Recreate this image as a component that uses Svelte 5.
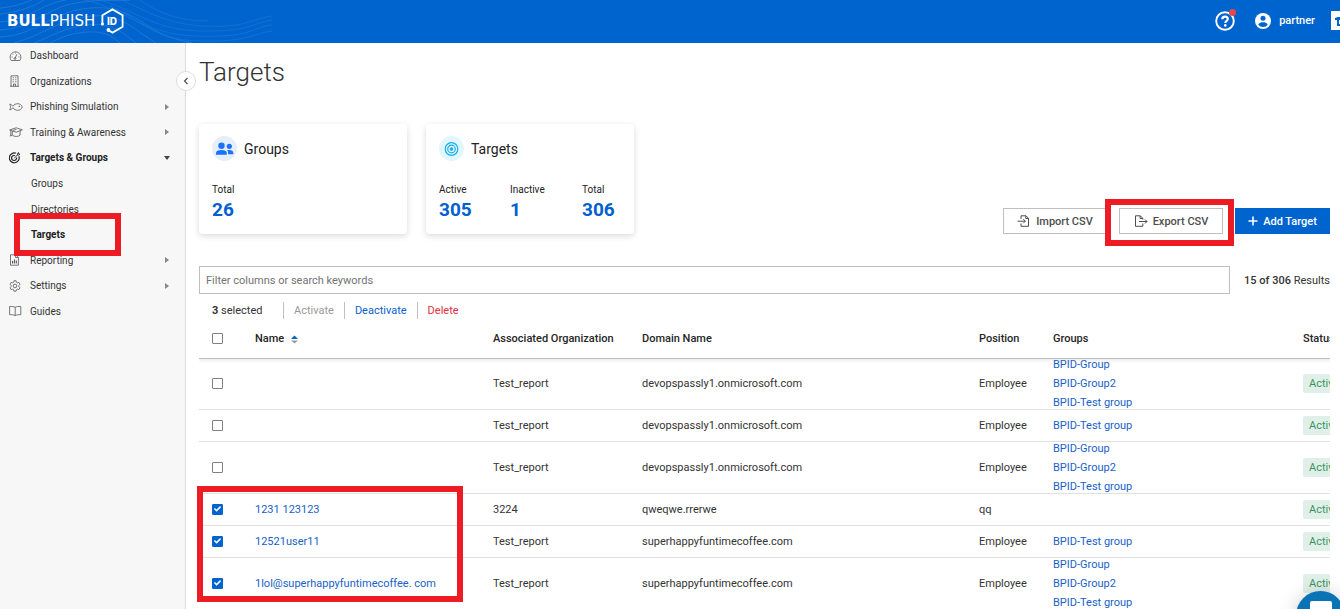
<script lang="ts">
    const nav = [
        { label: 'Dashboard', icon: 'gauge' },
        { label: 'Organizations', icon: 'building' },
        { label: 'Phishing Simulation', icon: 'fish', arrow: 'right' },
        { label: 'Training & Awareness', icon: 'cap', arrow: 'right' },
        { label: 'Targets & Groups', icon: 'target', arrow: 'down', active: true },
        { label: 'Groups', sub: true },
        { label: 'Directories', sub: true },
        { label: 'Targets', sub: true, active: true, marked: true },
        { label: 'Reporting', icon: 'report', arrow: 'right' },
        { label: 'Settings', icon: 'gear', arrow: 'right' },
        { label: 'Guides', icon: 'book' }
    ];

    const allGroups = ['BPID-Group', 'BPID-Group2', 'BPID-Test group'];

    let query = $state('');
    let rows = $state([
        { checked: false, name: '', org: 'Test_report', domain: 'devopspassly1.onmicrosoft.com', position: 'Employee', groups: allGroups },
        { checked: false, name: '', org: 'Test_report', domain: 'devopspassly1.onmicrosoft.com', position: 'Employee', groups: ['BPID-Test group'] },
        { checked: false, name: '', org: 'Test_report', domain: 'devopspassly1.onmicrosoft.com', position: 'Employee', groups: allGroups },
        { checked: true, name: '1231 123123', org: '3224', domain: 'qweqwe.rrerwe', position: 'qq', groups: [] as string[] },
        { checked: true, name: '12521user11', org: 'Test_report', domain: 'superhappyfuntimecoffee.com', position: 'Employee', groups: ['BPID-Test group'] },
        { checked: true, name: '1lol@superhappyfuntimecoffee. com', org: 'Test_report', domain: 'superhappyfuntimecoffee.com', position: 'Employee', groups: allGroups }
    ]);

    let selected = $derived(rows.filter((r) => r.checked).length);

    function toggleAll(e: Event) {
        const on = (e.currentTarget as HTMLInputElement).checked;
        rows.forEach((r) => (r.checked = on));
    }
</script>

{#snippet navIcon(name)}
    <svg class="nav-icon" viewBox="0 0 14 12" fill="none" stroke="currentColor" stroke-width="0.8">
        {#if name === 'gauge'}
            <path d="M2.2 10.500A5.400 5.400 0 1 1 10.800 10.500Z" />
            <path d="M6.100 8.300 7.900 4.100M6.500 2.500v1M2.500 6.900h1M10.500 6.900h-1M3.700 4.200l.6.6" />
            <circle cx="6" cy="8.500" r="0.9" />
        {:else if name === 'building'}
            <path d="M2 11.300V.8h7v10.500M1 11.300h9M4.500 11.300V9h2v2.300" />
            <path d="M3.700 2.800h1M6.300 2.800h1M3.700 4.800h1M6.300 4.800h1M3.700 6.800h1M6.300 6.800h1" stroke-width="1.100" />
        {:else if name === 'fish'}
            <path d="M.8 3c1.200.3 2.400 1.200 3 2.200C5.200 3.400 7 2.700 8.800 2.700c2 0 3.800 1.300 4.500 3.300-.7 2-2.500 3.300-4.500 3.300-1.800 0-3.600-.7-5-2.500-.6 1-1.800 1.900-3 2.200C1.300 7.500 1.600 6.800 1.600 6S1.300 4.500.8 3z" />
            <circle cx="10.300" cy="5.300" r="0.4" />
        {:else if name === 'cap'}
            <path d="M.6 4 7.200 1.800 13.400 3.800 7.200 6.200zM3.300 5.200V9.200c2 1.700 6 1.700 7.800 0V4.800M1.800 4.600v4l-.8 1.800M2 8.600l.8 1.600M4 4.300l3.500-.8" />
        {:else if name === 'target'}
            <path d="M7 1.300A4.900 4.900 0 1 0 9.900 4.300M6 3.700A2.500 2.500 0 1 0 7.500 5.500" stroke-width="1.200" />
            <path d="M5.200 6.300 8.400 3V1.400L9.600.5v1.600h1.400L9.800 3.200H8.400" />
        {:else if name === 'report'}
            <path d="M1.500.8h5.300l2.600 2.600v7.800H1.500zM6.600.8v2.800h2.800" />
            <path d="M3.500 9.500V7M5.400 9.500V5.500M7.300 9.500V6.500" stroke-width="1.100" />
        {:else if name === 'gear'}
            <path d="M4.900.8h2.200l.3 1.500 1.100.6 1.400-.5 1.100 1.800L9.900 5.300v1.300l1.100 1.200-1.100 1.800-1.400-.5-1.100.6-.3 1.500H4.900l-.3-1.500-1.100-.6-1.400.5L1 7.800l1.100-1.200V5.300L1 4.200l1.100-1.800 1.400.5 1.100-.6z" />
            <circle cx="6" cy="6" r="1.800" />
        {:else if name === 'book'}
            <path d="M6.200 10.600V2.300C5 1.500 3 1.400.6 1.500v8.200c2.400-.1 4.400.1 5.600.9 1.200-.8 3.200-1 5.600-.9V1.500C9.400 1.400 7.400 1.500 6.200 2.300" />
        {/if}
    </svg>
{/snippet}

<div class="shell">
    <header class="topbar">
        <svg class="waves" viewBox="0 0 272 43" fill="none" stroke="#1c78d6" aria-hidden="true">
            <path d="M0 8C14 7 24 3 32 0M0 14C20 12 34 6 44 0M0 22C30 20 40 4 66 0M0 30C34 28 46 8 76 3S116 2 130 0M0 37C36 35 50 14 82 9S130 14 148 26 180 40 192 43" />
            <path d="M14 43C40 36 56 22 84 17S126 22 142 34L156 43M34 43C52 36 64 28 86 25S120 30 136 43M50 43C64 36 72 33 88 32S112 36 120 43" />
            <path d="M84 0C120 6 140 34 196 36S250 28 272 25M98 0C130 6 150 30 200 31S252 23 272 20M120 0C140 6 160 24 204 26S250 19 272 16M140 0C160 14 180 21 208 21" opacity="0.6" />
            <path d="M110 6C136 16 150 40 200 41S250 34 272 31" opacity="0.6" />
        </svg>
        <a class="logo" href="#home">
            <span><b>BULL</b>PHISH</span>
            <svg viewBox="0 0 24 26" fill="none" stroke="#fff" stroke-width="1.800">
                <path d="M2.400 16V7.200L12.500 1.400 22.600 7.200V18.800L12.500 24.600 9 22.500" />
                <circle cx="2.400" cy="16" r="1.600" fill="#fff" stroke="none" />
                <circle cx="8.400" cy="22" r="1.900" fill="#fff" stroke="none" />
                <text x="7" y="16.500" class="logo-id">ID</text>
            </svg>
        </a>
        <div class="account">
            <button class="help" aria-label="Help">
                <svg viewBox="0 0 20 20">
                    <circle cx="10" cy="10" r="8.800" fill="none" stroke="#fff" stroke-width="1.900" />
                    <path d="M7.300 8.200C7.300 6.500 8.500 5.600 10 5.600s2.800.9 2.800 2.400c0 1.800-2.500 2-2.500 4" fill="none" stroke="#fff" stroke-width="2.200" />
                    <circle cx="10.300" cy="14.400" r="1.300" fill="#fff" />
                </svg>
                <span class="dot"></span>
            </button>
            <button class="user">
                <svg viewBox="0 0 16 16">
                    <circle cx="8" cy="8" r="8" fill="#fff" />
                    <circle cx="8" cy="5.300" r="2.500" fill="#0064cf" />
                    <path d="M3.200 11.500C4.200 9.800 6 9.300 8 9.300s3.800.5 4.800 2.200C11.700 13.200 10 14 8 14s-3.700-.8-4.800-2.500z" fill="#0064cf" />
                </svg>
                partner
            </button>
            <button class="training" aria-label="Training portal">
                <svg viewBox="0 0 20 20" fill="#0064cf"><path d="M4 7 7 6h9v3H8v4h6v2H6V9H4z" /></svg>
            </button>
        </div>
    </header>

    <div class="body">
        <aside class="sidebar">
            <nav>
                {#each nav as item}
                    <a href="#{item.label}" class="nav-item" class:active={item.active} class:sub={item.sub}>
                        {#if item.icon}{@render navIcon(item.icon)}{/if}
                        <span>{item.label}</span>
                        {#if item.arrow}<i class="arrow {item.arrow}"></i>{/if}
                        {#if item.marked}<span class="mark mark-nav"></span>{/if}
                    </a>
                {/each}
            </nav>
            <button class="collapse" aria-label="Collapse menu">
                <svg viewBox="0 0 6 8" fill="none" stroke="#444" stroke-width="1.100"><path d="M4.500 1 1.500 4l3 3" /></svg>
            </button>
        </aside>

        <main>
            <h1>Targets</h1>

            <section class="overview">
                <div class="card">
                    <h2>
                        <span class="badge groups">
                            <svg viewBox="0 0 18 14" fill="#1a73ff">
                                <circle cx="5.500" cy="3.800" r="3.200" />
                                <path d="M0 12.800v-1.800C0 9 2 8 5.500 8s5.300 1 5.300 3v1.800z" />
                                <circle cx="13.300" cy="4.300" r="2.600" />
                                <path d="M12 12.300h5.300v-1.400c0-1.800-1.500-2.900-4-2.900-.9 0-1.600.1-2.200.3.7.7 1 1.600 1 2.600z" />
                            </svg>
                        </span>
                        Groups
                    </h2>
                    <dl>
                        <div><dt>Total</dt><dd>26</dd></div>
                    </dl>
                </div>
                <div class="card">
                    <h2>
                        <span class="badge targets">
                            <svg viewBox="0 0 18 14" fill="none" stroke="#17aeea" stroke-width="1.200">
                                <circle cx="8.500" cy="7" r="6.300" />
                                <circle cx="8.500" cy="7" r="3.800" />
                                <circle cx="8.500" cy="7" r="1.200" fill="#17aeea" />
                            </svg>
                        </span>
                        Targets
                    </h2>
                    <dl>
                        <div><dt>Active</dt><dd>305</dd></div>
                        <div><dt>Inactive</dt><dd>1</dd></div>
                        <div><dt>Total</dt><dd>306</dd></div>
                    </dl>
                </div>

                <div class="actions">
                    <button class="btn">
                        <svg viewBox="0 0 14 12" fill="none" stroke="currentColor">
                            <path d="M4 4V.8h5l2.500 2.500v8H4V8.500M8.800.8v2.700h2.700M.5 6.200h7.800M6.300 4.200l2 2-2 2" />
                        </svg>
                        Import CSV
                    </button>
                    <span class="export">
                        <button class="btn">
                            <svg viewBox="0 0 14 12" fill="none" stroke="currentColor">
                                <path d="M8.800 4.500V3.300L6.300.8H1.500v10.500h7.300V8.500M6.100.8v2.700h2.700M5 6.500h8M11 4.500l2 2-2 2" />
                            </svg>
                            Export CSV
                        </button>
                        <span class="mark mark-export"></span>
                    </span>
                    <button class="btn primary">
                        <svg viewBox="0 0 10 12" fill="none" stroke="currentColor" stroke-width="1.600"><path d="M5 1.500v9M.5 6h9" /></svg>
                        Add Target
                    </button>
                </div>
            </section>

            <div class="search">
                <input type="text" aria-label="Filter targets" placeholder="Filter columns or search keywords" bind:value={query} />
                <p><b>15 of 306</b> Results</p>
            </div>

            <div class="bulk">
                <span class="count"><b>{selected}</b> selected</span>
                <button disabled>Activate</button>
                <button class="link">Deactivate</button>
                <button class="danger">Delete</button>
            </div>

            <div class="table-wrap">
                <table>
                    <colgroup>
                        <col class="c-check" /><col class="c-name" /><col class="c-org" /><col class="c-domain" />
                        <col class="c-position" /><col class="c-groups" /><col class="c-status" />
                    </colgroup>
                    <thead>
                        <tr>
                            <th><input type="checkbox" aria-label="Select all" onchange={toggleAll} /></th>
                            <th>
                                Name
                                <svg class="sort" viewBox="0 0 8 9"><path d="M4 0 8 4H0z" fill="#0064cf" /><path d="M0 5.500h8L4 9z" fill="#999" /></svg>
                            </th>
                            <th>Associated Organization</th>
                            <th>Domain Name</th>
                            <th>Position</th>
                            <th>Groups</th>
                            <th>Status</th>
                        </tr>
                    </thead>
                    <tbody>
                        {#each rows as row, i}
                            <tr class:tall={row.groups.length > 1}>
                                <td><input type="checkbox" aria-label="Select row {i + 1}" bind:checked={row.checked} /></td>
                                <td>{#if row.name}<a href="#target">{row.name}</a>{/if}</td>
                                <td>{row.org}</td>
                                <td>{row.domain}</td>
                                <td>{row.position}</td>
                                <td>
                                    <div class="group-list">
                                        {#each row.groups as group}<a href="#group">{group}</a>{/each}
                                    </div>
                                </td>
                                <td><span class="status">Active</span></td>
                            </tr>
                        {/each}
                    </tbody>
                </table>
            </div>
            <span class="mark mark-rows"></span>
        </main>
    </div>

    <button class="chat" aria-label="Open chat">
        <svg viewBox="0 0 22 24" fill="#fff"><path d="M2 0h18a2 2 0 0 1 2 2v22l-5-4H2a2 2 0 0 1-2-2V2a2 2 0 0 1 2-2z" /></svg>
    </button>
</div>

<style>
    :global(body) {
        margin: 0;
        overflow: hidden;
    }

    .shell {
        display: flex;
        flex-direction: column;
        height: 100vh;
        overflow: hidden;
        background: #fff;
        color: #333;
        font: 11px/19px Roboto, sans-serif;
    }

    .shell :is(*, *::before) {
        box-sizing: border-box;
    }

    a {
        color: #1a5fc8;
        text-decoration: none;
    }

    button {
        padding: 0;
        border: 0;
        background: none;
        color: inherit;
        font: inherit;
        cursor: pointer;
    }

    .mark {
        position: absolute;
        border: 6px solid #ed1c24;
        pointer-events: none;
        z-index: 2;
    }

    /* top bar */
    .topbar {
        position: relative;
        display: flex;
        flex: none;
        align-items: center;
        justify-content: space-between;
        height: 43px;
        padding: 0 0 2px 7px;
        background: #0064cf;
        color: #fff;
    }

    .waves {
        position: absolute;
        top: 0;
        left: 0;
        width: 272px;
        height: 43px;
    }

    .logo {
        position: relative;
        display: flex;
        align-items: center;
        gap: 5px;
        color: #fff;
        font: 15px/20px 'DejaVu Sans', sans-serif;
    }

    .logo svg {
        width: 24px;
        height: 26px;
    }

    .logo-id {
        fill: #fff;
        stroke: none;
        font: 800 10px Inter, sans-serif;
    }

    .account {
        display: flex;
        align-items: center;
    }

    .help {
        position: relative;
        width: 20px;
        height: 20px;
        margin-right: 20px;
    }

    .help svg {
        display: block;
    }

    .dot {
        position: absolute;
        top: -2px;
        right: -1px;
        width: 7px;
        height: 7px;
        border-radius: 50%;
        background: #e04a4f;
    }

    .user {
        display: flex;
        align-items: center;
        gap: 8px;
        margin-right: 16px;
        font-weight: 500;
    }

    .user svg {
        width: 16px;
    }

    .training {
        width: 9px;
        height: 19px;
        overflow: hidden;
        background: #fff;
    }

    .training svg {
        display: block;
        width: 20px;
        height: 20px;
    }

    .body {
        display: flex;
        flex: 1;
        min-height: 0;
    }

    /* sidebar */
    .sidebar {
        position: relative;
        flex: none;
        width: 186px;
        border-right: 1px solid #ddd;
        background: #f7f7f7;
    }

    nav {
        display: grid;
        grid-auto-rows: 1fr;
        height: 281px;
    }

    .nav-item {
        position: relative;
        display: flex;
        align-items: center;
        gap: 7px;
        padding: 0 15px 0 9px;
        color: #333;
        font-size: 10px;
    }

    .nav-item.sub {
        padding-left: 31px;
    }

    .nav-item.active {
        color: #222;
        font-weight: 700;
    }

    .nav-icon {
        width: 14px;
        height: 12px;
        color: #555;
    }

    .active .nav-icon {
        color: #222;
    }

    .arrow {
        margin-left: auto;
        border: 3px solid transparent;
    }

    .arrow.right {
        border-width: 3px 0 3px 4px;
        border-left-color: #888;
        margin-right: 1px;
    }

    .arrow.down {
        border-width: 4px 3px 0;
        border-top-color: #444;
    }

    .mark-nav {
        top: -9px;
        left: 14px;
        width: 107px;
        height: 43px;
    }

    .collapse {
        position: absolute;
        top: 28px;
        right: -11px;
        display: grid;
        place-items: center;
        width: 20px;
        height: 20px;
        border: 1px solid #ddd;
        border-radius: 50%;
        background: #fff;
        z-index: 1;
    }

    .collapse svg {
        width: 6px;
        height: 8px;
    }

    /* content */
    main {
        position: relative;
        flex: 1;
        min-width: 0;
        padding: 11px 10px 0 13px;
    }

    h1 {
        margin: 0 0 34px;
        font-size: 26px;
        font-weight: 300;
        line-height: 36px;
    }

    .overview {
        display: flex;
        align-items: flex-end;
        gap: 19px;
        margin-bottom: 32px;
    }

    .card {
        width: 208px;
        height: 110px;
        padding: 12px 13px;
        border-radius: 4px;
        box-shadow: 0 2px 6px rgba(0, 0, 0, 0.15);
        color: #222;
    }

    h2 {
        display: flex;
        align-items: center;
        gap: 7px;
        margin: 0 0 20px;
        font-size: 14px;
        font-weight: 400;
        line-height: 24px;
    }

    .badge {
        display: grid;
        place-items: center;
        width: 25px;
        height: 25px;
        border-radius: 50%;
    }

    .badge svg {
        width: 18px;
        height: 14px;
    }

    .badge.groups {
        background: #e6eefc;
    }

    .badge.targets {
        background: #e2f6fe;
    }

    dl {
        display: grid;
        grid-template-columns: 55px 56px 1fr;
        column-gap: 16px;
        margin: 0;
    }

    dt {
        font-size: 10px;
        line-height: 18px;
    }

    dd {
        margin: 0;
        color: #0060cf;
        font-size: 19px;
        font-weight: 700;
        line-height: 22px;
    }

    .actions {
        display: flex;
        gap: 12px;
        margin-left: auto;
    }

    .export {
        position: relative;
    }

    .btn {
        display: flex;
        align-items: center;
        justify-content: center;
        gap: 5px;
        width: 104px;
        height: 26px;
        border: 1px solid #bfbfbf;
        color: #4d4d4d;
        font-weight: 500;
        white-space: nowrap;
    }

    .btn svg {
        width: 14px;
        height: 12px;
    }

    .btn.primary {
        width: 95px;
        border-color: #0064cf;
        background: #0064cf;
        color: #fff;
    }

    .primary svg {
        width: 10px;
    }

    .mark-export {
        top: -9px;
        left: -14px;
        width: 129px;
        height: 47px;
    }

    .search {
        display: flex;
        align-items: center;
        gap: 14px;
    }

    .search input {
        flex: 1;
        min-width: 0;
        height: 28px;
        padding: 0 6px;
        border: 1px solid #bfbfbf;
        font: inherit;
    }

    .search input::placeholder {
        color: #737373;
    }

    .search p {
        margin: 0;
        white-space: nowrap;
    }

    b {
        font-weight: 700;
    }

    .search b {
        font-weight: 500;
    }

    .bulk {
        display: flex;
        align-items: center;
        padding: 7px 13px 0;
    }

    .bulk .count {
        width: 71px;
    }

    .bulk button {
        height: 17px;
        padding: 0 10px;
        border-left: 1px solid #bfbfbf;
        line-height: 17px;
    }

    .bulk button:disabled {
        color: #999;
    }

    .bulk .link {
        color: #0b5fcc;
    }

    .bulk .danger {
        color: #e0313f;
    }

    /* table */
    .table-wrap {
        overflow: hidden;
    }

    table {
        width: 107%;
        border-collapse: collapse;
        table-layout: fixed;
    }

    .c-check {
        width: 43px;
    }

    .c-name {
        width: 238px;
    }

    .c-org {
        width: 149px;
    }

    .c-domain {
        width: 337px;
    }

    .c-position {
        width: 74px;
    }

    .c-groups {
        width: 250px;
    }

    th,
    td {
        padding: 0 0 0 13px;
        text-align: left;
        white-space: nowrap;
    }

    th {
        height: 38px;
        color: #262626;
        font-weight: 500;
    }

    thead tr {
        border-bottom: 1px solid #bfbfbf;
        box-shadow: 0 2px 4px rgba(0, 0, 0, 0.1);
    }

    td {
        height: 32px;
        border-bottom: 1px solid #e0e0e0;
    }

    .tall td {
        height: 52px;
    }

    .tall:first-child td {
        height: 51px;
    }

    .sort {
        width: 7px;
        height: 9px;
        margin-left: 4px;
        vertical-align: -2px;
    }

    /* three groups are taller than the row, so the list spills evenly */
    .group-list {
        display: flex;
        flex-direction: column;
        justify-content: center;
        height: 30px;
    }

    .status {
        display: inline-block;
        padding: 0 6px;
        border-radius: 2px;
        background: #e0f0e8;
        color: #3a9463;
    }

    input[type='checkbox'] {
        display: grid;
        place-items: center;
        appearance: none;
        width: 11px;
        height: 11px;
        margin: 0;
        border: 1px solid #808080;
        border-radius: 1px;
        background: #fff;
    }

    input[type='checkbox']:checked {
        border-color: #0064cf;
        background: #0064cf;
    }

    input[type='checkbox']:checked::before {
        content: '';
        width: 9px;
        height: 9px;
        background: #fff;
        clip-path: polygon(10% 50%, 22% 38%, 40% 56%, 78% 18%, 90% 30%, 40% 80%);
    }

    .mark-rows {
        top: 443px;
        left: 11px;
        width: 266px;
        height: 116px;
    }

    .chat {
        position: fixed;
        right: -5px;
        bottom: -31px;
        width: 49px;
        height: 49px;
        border-radius: 50%;
        background: #0873b5;
        box-shadow: 0 2px 20px rgba(0, 0, 0, 0.2);
        z-index: 3;
    }

    .chat svg {
        width: 22px;
        height: 24px;
    }
</style>
